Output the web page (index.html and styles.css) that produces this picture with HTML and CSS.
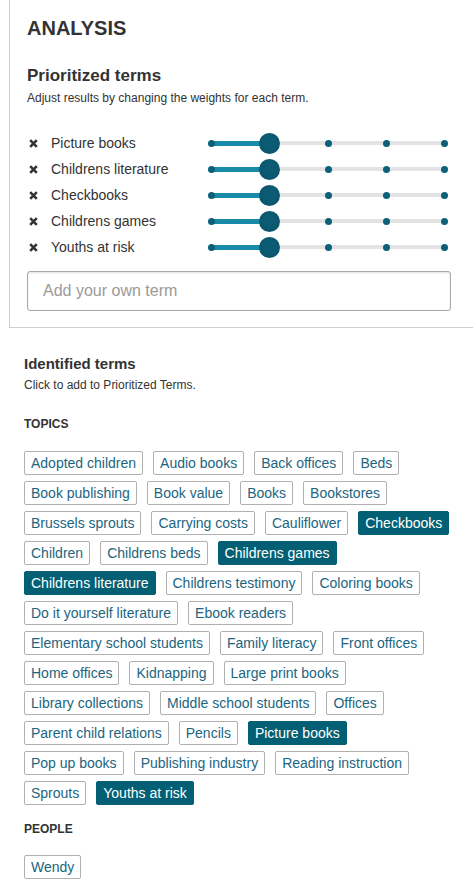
FILE: index.html
```html
<!DOCTYPE html>
<html lang="en">
<head>
<meta charset="utf-8">
<title>Analysis</title>
<link rel="stylesheet" href="styles.css">
</head>
<body>
<section class="panel">
  <h1 class="title">ANALYSIS</h1>
  <h2 class="subtitle">Prioritized terms</h2>
  <p class="hint">Adjust results by changing the weights for each term.</p>
  <ul class="terms">
    <li class="term">
      <span class="remove"><svg viewBox="0 0 9 9" width="9" height="9"><path d="M1.2 1.2L7.8 7.8M7.8 1.2L1.2 7.8"/></svg></span>
      <span class="term-label">Picture books</span>
      <div class="slider"><div class="range"><div class="track"></div><div class="fill" style="width:25%"></div><span class="dot d0"></span><span class="dot d2"></span><span class="dot d3"></span><span class="dot d4"></span><span class="knob" style="left:25%"></span></div></div>
    </li>
    <li class="term">
      <span class="remove"><svg viewBox="0 0 9 9" width="9" height="9"><path d="M1.2 1.2L7.8 7.8M7.8 1.2L1.2 7.8"/></svg></span>
      <span class="term-label">Childrens literature</span>
      <div class="slider"><div class="range"><div class="track"></div><div class="fill" style="width:25%"></div><span class="dot d0"></span><span class="dot d2"></span><span class="dot d3"></span><span class="dot d4"></span><span class="knob" style="left:25%"></span></div></div>
    </li>
    <li class="term">
      <span class="remove"><svg viewBox="0 0 9 9" width="9" height="9"><path d="M1.2 1.2L7.8 7.8M7.8 1.2L1.2 7.8"/></svg></span>
      <span class="term-label">Checkbooks</span>
      <div class="slider"><div class="range"><div class="track"></div><div class="fill" style="width:25%"></div><span class="dot d0"></span><span class="dot d2"></span><span class="dot d3"></span><span class="dot d4"></span><span class="knob" style="left:25%"></span></div></div>
    </li>
    <li class="term">
      <span class="remove"><svg viewBox="0 0 9 9" width="9" height="9"><path d="M1.2 1.2L7.8 7.8M7.8 1.2L1.2 7.8"/></svg></span>
      <span class="term-label">Childrens games</span>
      <div class="slider"><div class="range"><div class="track"></div><div class="fill" style="width:25%"></div><span class="dot d0"></span><span class="dot d2"></span><span class="dot d3"></span><span class="dot d4"></span><span class="knob" style="left:25%"></span></div></div>
    </li>
    <li class="term">
      <span class="remove"><svg viewBox="0 0 9 9" width="9" height="9"><path d="M1.2 1.2L7.8 7.8M7.8 1.2L1.2 7.8"/></svg></span>
      <span class="term-label">Youths at risk</span>
      <div class="slider"><div class="range"><div class="track"></div><div class="fill" style="width:25%"></div><span class="dot d0"></span><span class="dot d2"></span><span class="dot d3"></span><span class="dot d4"></span><span class="knob" style="left:25%"></span></div></div>
    </li>
  </ul>
  <input class="add-term" type="text" placeholder="Add your own term">
</section>

<section class="identified">
  <h3 class="section-title">Identified terms</h3>
  <p class="section-hint">Click to add to Prioritized Terms.</p>

  <h4 class="group-title">TOPICS</h4>
  <div class="tags">
    <span class="tag">Adopted children</span>
    <span class="tag">Audio books</span>
    <span class="tag">Back offices</span>
    <span class="tag">Beds</span>
    <span class="tag">Book publishing</span>
    <span class="tag">Book value</span>
    <span class="tag">Books</span>
    <span class="tag">Bookstores</span>
    <span class="tag">Brussels sprouts</span>
    <span class="tag">Carrying costs</span>
    <span class="tag">Cauliflower</span>
    <span class="tag selected">Checkbooks</span>
    <span class="tag">Children</span>
    <span class="tag">Childrens beds</span>
    <span class="tag selected">Childrens games</span>
    <span class="tag selected">Childrens literature</span>
    <span class="tag">Childrens testimony</span>
    <span class="tag">Coloring books</span>
    <span class="tag">Do it yourself literature</span>
    <span class="tag">Ebook readers</span>
    <span class="tag">Elementary school students</span>
    <span class="tag">Family literacy</span>
    <span class="tag">Front offices</span>
    <span class="tag">Home offices</span>
    <span class="tag">Kidnapping</span>
    <span class="tag">Large print books</span>
    <span class="tag">Library collections</span>
    <span class="tag">Middle school students</span>
    <span class="tag">Offices</span>
    <span class="tag">Parent child relations</span>
    <span class="tag">Pencils</span>
    <span class="tag selected">Picture books</span>
    <span class="tag">Pop up books</span>
    <span class="tag">Publishing industry</span>
    <span class="tag">Reading instruction</span>
    <span class="tag">Sprouts</span>
    <span class="tag selected">Youths at risk</span>
  </div>

  <h4 class="group-title people">PEOPLE</h4>
  <div class="tags people-tags">
    <span class="tag">Wendy</span>
  </div>
</section>
</body>
</html>
```

FILE: styles.css
```css
* { box-sizing: border-box; }

html, body {
  margin: 0;
  padding: 0;
  background: #fff;
}

body {
  font-family: "Liberation Sans", Arial, sans-serif;
  color: #333;
  overflow: hidden;
}

.panel {
  margin-left: 9px;
  border-left: 1px solid #cfcfcf;
  border-bottom: 1px solid #cfcfcf;
  padding: 16px 22px 16px 17px;
}

.title {
  margin: 0;
  font-size: 20px;
  line-height: 24px;
  font-weight: bold;
  color: #333;
}

.subtitle {
  margin: 26px 0 0;
  font-size: 17px;
  line-height: 20px;
  font-weight: bold;
  color: #333;
}

.hint {
  margin: 5px 0 0;
  font-size: 12px;
  line-height: 15px;
  color: #333;
}

.terms {
  list-style: none;
  margin: 24px 0 0;
  padding: 0;
}

.term {
  display: flex;
  align-items: center;
  height: 26px;
}

.remove {
  width: 24px;
  flex: none;
  display: flex;
  align-items: center;
  padding-left: 2px;
}

.remove svg {
  display: block;
}

.remove path {
  stroke: #333;
  stroke-width: 2.6;
  fill: none;
}

.term-label {
  flex: 1;
  font-size: 14px;
  line-height: 18px;
  color: #333;
}

.slider {
  width: 240px;
  margin-right: 3px;
  padding: 0 3.5px;
  flex: none;
}

.range {
  position: relative;
  height: 26px;
}

.range .track {
  position: absolute;
  left: 0;
  right: 0;
  top: 11px;
  height: 4px;
  background: #e3e3e3;
}

.range .fill {
  position: absolute;
  left: 0;
  top: 10.5px;
  height: 5px;
  background: #178ba7;
}

.dot {
  position: absolute;
  top: 9.5px;
  width: 7px;
  height: 7px;
  margin-left: -3.5px;
  border-radius: 50%;
  background: #0c6078;
}

.d0 { left: 0; }
.d2 { left: 50%; }
.d3 { left: 75%; }
.d4 { left: 100%; }

.knob {
  position: absolute;
  top: 2.5px;
  width: 21px;
  height: 21px;
  margin-left: -10.5px;
  border-radius: 50%;
  background: radial-gradient(circle at 50% 45%, #0d5d76 0%, #0b5770 60%, #084a61 100%);
}

.add-term {
  display: block;
  width: 100%;
  height: 40px;
  margin: 11px 0 0;
  padding: 0 15px;
  border: 1px solid #a8a8a8;
  border-radius: 3px;
  box-shadow: inset 0 1px 2px rgba(0, 0, 0, 0.12);
  font-family: "Liberation Sans", Arial, sans-serif;
  font-size: 16px;
  color: #333;
  background: #fff;
  outline: none;
}

.add-term::placeholder {
  color: #9a9a9a;
}

.identified {
  padding: 27px 22px 20px 24px;
}

.section-title {
  margin: 0;
  font-size: 15px;
  line-height: 18px;
  font-weight: bold;
  color: #333;
}

.section-hint {
  margin: 5px 0 0;
  font-size: 12px;
  line-height: 15px;
  color: #333;
}

.group-title {
  margin: 24px 0 0;
  font-size: 12px;
  line-height: 15px;
  font-weight: bold;
  color: #333;
}

.group-title.people {
  margin-top: 17px;
}

.tags {
  display: flex;
  flex-wrap: wrap;
  column-gap: 10px;
  row-gap: 6px;
  margin-top: 19px;
}

.people-tags {
  margin-top: 18px;
}

.tag {
  display: inline-block;
  border: 1px solid #b0b0b0;
  border-radius: 2px;
  padding: 2px 6px;
  font-size: 14px;
  line-height: 18px;
  color: #1b6580;
  background: #fff;
  white-space: nowrap;
}

.tag.selected {
  background: #035f74;
  border-color: #035f74;
  color: #fff;
}
```
